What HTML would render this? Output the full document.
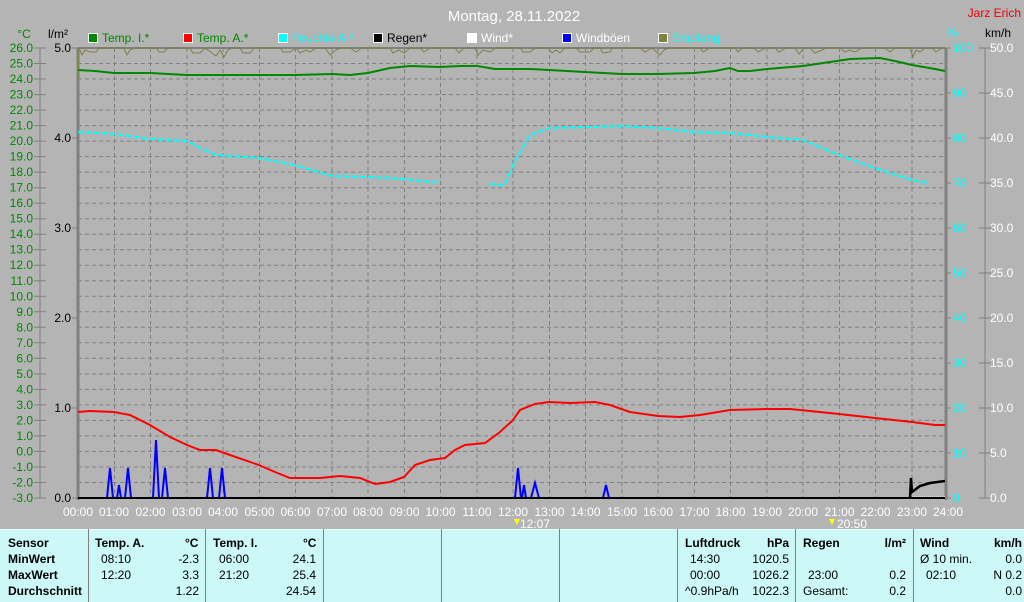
<!DOCTYPE html><html><head><meta charset="utf-8"><style>
body{margin:0;width:1024px;height:602px;overflow:hidden;background:#b4b4b4;font-family:"Liberation Sans",sans-serif}
.t{position:absolute;font-size:12px;color:#000;white-space:nowrap}
.b{font-weight:bold}
</style></head><body>
<svg width="1024" height="529" style="position:absolute;left:0;top:0" font-family="Liberation Sans, sans-serif" font-size="12">
<rect width="1024" height="529" fill="#b4b4b4"/>
<text x="514" y="21" fill="#fff" font-size="15" text-anchor="middle">Montag, 28.11.2022</text>
<text x="1021" y="17" fill="#e00" text-anchor="end">Jarz Erich</text>
<text x="24" y="38" fill="#080" text-anchor="middle">°C</text>
<text x="58" y="38" fill="#000" text-anchor="middle">l/m²</text>
<text x="952" y="37" fill="#0ff" text-anchor="middle">%</text>
<text x="998" y="37" fill="#000" text-anchor="middle">km/h</text>
<g stroke="#fff" stroke-width="1">
<rect x="88.5" y="33.5" width="9" height="9" fill="#080"/>
<rect x="183.5" y="33.5" width="9" height="9" fill="#f00"/>
<rect x="278.5" y="33.5" width="9" height="9" fill="#0ff"/>
<rect x="373.5" y="33.5" width="9" height="9" fill="#000"/>
<rect x="467.5" y="33.5" width="9" height="9" fill="#fff"/>
<rect x="562.5" y="33.5" width="9" height="9" fill="#00f"/>
<rect x="658.5" y="33.5" width="9" height="9" fill="#808040"/>
</g>
<text x="102" y="42" fill="#080">Temp. I.*</text>
<text x="197" y="42" fill="#080">Temp. A.*</text>
<text x="292" y="42" fill="#0ff">Feuchte A.*</text>
<text x="387" y="42" fill="#000">Regen*</text>
<text x="481" y="42" fill="#fff">Wind*</text>
<text x="576" y="42" fill="#fff">Windböen</text>
<text x="672" y="42" fill="#0ff">Empfang</text>
<!-- grid -->
<g stroke="#808080" stroke-dasharray="4,3" stroke-width="1">
<path d="M114.5 48V498M150.5 48V498M187 48V498M223 48V498M259.5 48V498M295.5 48V498M332 48V498M368 48V498M404.5 48V498M440.5 48V498M477 48V498M513 48V498M549.5 48V498M585.5 48V498M622 48V498M658 48V498M694.5 48V498M730.5 48V498M767 48V498M803 48V498M839.5 48V498M875.5 48V498M912 48V498"/>
<path d="M78 63.5H945M78 79H945M78 94.6H945M78 110.1H945M78 125.6H945M78 141.1H945M78 156.6H945M78 172.1H945M78 187.7H945M78 203.2H945M78 218.7H945M78 234.2H945M78 249.7H945M78 265.2H945M78 280.8H945M78 296.3H945M78 311.8H945M78 327.3H945M78 342.8H945M78 358.3H945M78 373.9H945M78 389.4H945M78 404.9H945M78 420.4H945M78 435.9H945M78 451.4H945M78 467H945M78 482.5H945"/>
</g>
<path d="M78 48H945" stroke="#808080" stroke-width="2"/>
<path d="M78 48V500M946 48V500" stroke="#808080" stroke-width="3"/>
<path d="M40 48V498M985 48V498" stroke="#808080"/>
<g stroke="#808080">
<path d="M34 48H46M34 63.5H46M34 79H46M34 94.6H46M34 110.1H46M34 125.6H46M34 141.1H46M34 156.6H46M34 172.1H46M34 187.7H46M34 203.2H46M34 218.7H46M34 234.2H46M34 249.7H46M34 265.2H46M34 280.8H46M34 296.3H46M34 311.8H46M34 327.3H46M34 342.8H46M34 358.3H46M34 373.9H46M34 389.4H46M34 404.9H46M34 420.4H46M34 435.9H46M34 451.4H46M34 467H46M34 482.5H46M34 498H46"/>
<path d="M979 48H991M979 93H991M979 138H991M979 183H991M979 228H991M979 273H991M979 318H991M979 363H991M979 408H991M979 453H991M979 498H991"/>
<path d="M72 48H78M72 138H78M72 228H78M72 318H78M72 408H78M72 498H78"/>
<path d="M945 48H951M945 93H951M945 138H951M945 183H951M945 228H951M945 273H951M945 318H951M945 363H951M945 408H951M945 453H951M945 498H951"/>
</g>
<g fill="#080" text-anchor="end">
<text x="33" y="52">26.0</text><text x="33" y="67.5">25.0</text><text x="33" y="83">24.0</text><text x="33" y="98.6">23.0</text><text x="33" y="114.1">22.0</text><text x="33" y="129.6">21.0</text><text x="33" y="145.1">20.0</text><text x="33" y="160.6">19.0</text><text x="33" y="176.1">18.0</text><text x="33" y="191.7">17.0</text><text x="33" y="207.2">16.0</text><text x="33" y="222.7">15.0</text><text x="33" y="238.2">14.0</text><text x="33" y="253.7">13.0</text><text x="33" y="269.2">12.0</text><text x="33" y="284.8">11.0</text><text x="33" y="300.3">10.0</text><text x="33" y="315.8">9.0</text><text x="33" y="331.3">8.0</text><text x="33" y="346.8">7.0</text><text x="33" y="362.3">6.0</text><text x="33" y="377.9">5.0</text><text x="33" y="393.4">4.0</text><text x="33" y="408.9">3.0</text><text x="33" y="424.4">2.0</text><text x="33" y="439.9">1.0</text><text x="33" y="455.4">0.0</text><text x="33" y="471">-1.0</text><text x="33" y="486.5">-2.0</text><text x="33" y="502">-3.0</text>
</g>
<g fill="#000" text-anchor="end">
<text x="71" y="52">5.0</text><text x="71" y="142">4.0</text><text x="71" y="232">3.0</text><text x="71" y="322">2.0</text><text x="71" y="412">1.0</text><text x="71" y="502">0.0</text>
</g>
<g fill="#0ff">
<text x="953" y="52">100</text><text x="953" y="97">90</text><text x="953" y="142">80</text><text x="953" y="187">70</text><text x="953" y="232">60</text><text x="953" y="277">50</text><text x="953" y="322">40</text><text x="953" y="367">30</text><text x="953" y="412">20</text><text x="953" y="457">10</text><text x="953" y="502">0</text>
</g>
<g fill="#fff">
<text x="990" y="52">50.0</text><text x="990" y="97">45.0</text><text x="990" y="142">40.0</text><text x="990" y="187">35.0</text><text x="990" y="232">30.0</text><text x="990" y="277">25.0</text><text x="990" y="322">20.0</text><text x="990" y="367">15.0</text><text x="990" y="412">10.0</text><text x="990" y="457">5.0</text><text x="990" y="502">0.0</text>
</g>
<g fill="#fff" text-anchor="middle">
<text x="78" y="516">00:00</text><text x="114" y="516">01:00</text><text x="150.5" y="516">02:00</text><text x="187" y="516">03:00</text><text x="223" y="516">04:00</text><text x="259.5" y="516">05:00</text><text x="295.5" y="516">06:00</text><text x="332" y="516">07:00</text><text x="368" y="516">08:00</text><text x="404.5" y="516">09:00</text><text x="440.5" y="516">10:00</text><text x="477" y="516">11:00</text><text x="513" y="516">12:00</text><text x="549.5" y="516">13:00</text><text x="585.5" y="516">14:00</text><text x="622" y="516">15:00</text><text x="658" y="516">16:00</text><text x="694.5" y="516">17:00</text><text x="730.5" y="516">18:00</text><text x="767" y="516">19:00</text><text x="803" y="516">20:00</text><text x="839.5" y="516">21:00</text><text x="875.5" y="516">22:00</text><text x="912" y="516">23:00</text><text x="948" y="516">24:00</text>
</g>
<text x="520" y="528" fill="#fff">12:07</text>
<text x="837" y="528" fill="#fff">20:50</text>
<path d="M514 519l3 6 3-6z" fill="#ff0"/><path d="M829 519l3 6 3-6z" fill="#ff0"/>
<!-- empfang -->
<polyline fill="none" stroke="#808040" stroke-width="1" points="78,80 79,48 82,55 85,50 90,52 96,52 99,48 124,48 127,55 130,50 135,48 156,48 159,52 164,52 168,48 190,48 193,53 200,53 205,48 212,53 216,56 220,50 224,57 228,50 232,48 240,48 243,53 250,53 254,48 280,48 283,52 290,52 296,48 300,53 306,50 310,52 316,48 325,48 330,55 336,50 340,48 350,48 356,52 362,48 390,48 393,53 399,50 404,53 410,48 420,48 424,52 430,48 455,48 459,53 464,48 475,48 478,55 483,50 490,52 496,48 520,48 523,52 530,52 535,48 548,48 552,53 556,50 560,53 565,48 576,48 580,52 590,52 594,48 600,48 603,53 610,52 612,48 640,48 645,52 652,48 660,55 664,50 668,48 700,48 703,52 710,48 735,48 738,52 742,48 754,48 758,52 766,48 775,48 779,52 786,48 795,48 799,54 804,48 810,48 815,53 822,50 826,48 840,48 845,52 850,50 855,52 862,48 885,48 890,52 895,48 910,48 913,57 916,50 920,52 925,48 932,48 936,52 942,48 945,48"/>
<!-- humidity -->
<polyline fill="none" stroke="#0ff" stroke-width="2" stroke-dasharray="6,2" points="78,132 114,134 150,139 187,141 200,148 216,155 259,158 295,165 332,176 368,177 404,179 430,182 440,182"/>
<polyline fill="none" stroke="#0ff" stroke-width="2" stroke-dasharray="6,2" points="490,184 505,185 513,165 530,135 549,128 585,127 622,126 658,128 694,132 730,133 767,137 803,140 839,155 875,168 912,180 930,183"/>
<!-- temp I -->
<polyline fill="none" stroke="#080" stroke-width="2" points="78,70 95,71 114,73 150,73 187,75 295,75 332,74 350,75 368,73 390,68 410,66 440,67 460,66 477,66 495,69 530,69 549,70 585,72 622,74 658,74 694,73 715,71 730,68 738,71 750,71 767,69 803,66 830,62 850,59 880,58 895,61 912,65 935,69 945,71"/>
<!-- temp A -->
<polyline fill="none" stroke="#f00" stroke-width="2" points="78,412 90,411 114,412 130,415 150,425 170,437 187,445 200,450 216,450 230,455 259,465 275,472 290,478 320,478 340,476 360,478 375,484 390,482 404,477 415,465 430,460 445,458 455,450 465,445 485,443 500,432 513,420 520,410 535,404 549,402 570,403 595,402 610,405 630,412 658,416 680,417 700,415 730,410 767,409 790,409 810,411 839,414 875,418 912,422 935,425 945,425"/>
<!-- wind gusts -->
<g fill="none" stroke="#00f" stroke-width="2">
<polyline points="107,498 110,468 113,498"/><polyline points="117,498 119,485 121,498"/><polyline points="125,498 128,468 131,498"/>
<polyline points="153,498 156,440 159,498"/><polyline points="162,498 165,468 168,498"/>
<polyline points="207,498 210,468 213,498"/><polyline points="219,498 222,468 225,498"/>
<polyline points="515,498 518,468 521,498"/><polyline points="522,498 524,485 526,498"/><polyline points="531,498 535,483 539,498"/>
<polyline points="603,498 606,485 609,498"/>
</g>
<!-- rain -->
<polyline fill="none" stroke="#000" stroke-width="2.5" points="910,498 911,478 912,492 920,486 930,483 945,481"/>
<path d="M912 497H945" stroke="#fff" stroke-dasharray="1,1"/>
<path d="M78 498H945" stroke="#000" stroke-width="2"/>
</svg>
<div style="position:absolute;left:0;top:529px;width:1024px;height:73px;background:#ccf8f8;border-top:1px solid #e8ffff;box-sizing:border-box"></div>
<div style="position:absolute;top:529px;height:73px;left:88px;width:1px;background:#808080"></div>
<div style="position:absolute;top:529px;height:73px;left:205px;width:1px;background:#808080"></div>
<div style="position:absolute;top:529px;height:73px;left:323px;width:1px;background:#808080"></div>
<div style="position:absolute;top:529px;height:73px;left:441px;width:1px;background:#808080"></div>
<div style="position:absolute;top:529px;height:73px;left:559px;width:1px;background:#808080"></div>
<div style="position:absolute;top:529px;height:73px;left:677px;width:1px;background:#808080"></div>
<div style="position:absolute;top:529px;height:73px;left:795px;width:1px;background:#808080"></div>
<div style="position:absolute;top:529px;height:73px;left:913px;width:1px;background:#808080"></div>
<div class="t b" style="left:8px;top:536px">Sensor</div>
<div class="t b" style="left:8px;top:552px">MinWert</div>
<div class="t b" style="left:8px;top:568px">MaxWert</div>
<div class="t b" style="left:8px;top:584px">Durchschnitt</div>
<div class="t b" style="left:95px;top:536px">Temp. A.</div>
<div class="t b" style="left:185px;top:536px">°C</div>
<div class="t" style="left:101px;top:552px">08:10</div><div class="t" style="right:825px;top:552px">-2.3</div>
<div class="t" style="left:101px;top:568px">12:20</div><div class="t" style="right:825px;top:568px">3.3</div>
<div class="t" style="right:825px;top:584px">1.22</div>
<div class="t b" style="left:213px;top:536px">Temp. I.</div>
<div class="t b" style="left:303px;top:536px">°C</div>
<div class="t" style="left:219px;top:552px">06:00</div><div class="t" style="right:708px;top:552px">24.1</div>
<div class="t" style="left:219px;top:568px">21:20</div><div class="t" style="right:708px;top:568px">25.4</div>
<div class="t" style="right:708px;top:584px">24.54</div>
<div class="t b" style="left:685px;top:536px">Luftdruck</div>
<div class="t b" style="right:235px;top:536px">hPa</div>
<div class="t" style="left:690px;top:552px">14:30</div><div class="t" style="right:235px;top:552px">1020.5</div>
<div class="t" style="left:690px;top:568px">00:00</div><div class="t" style="right:235px;top:568px">1026.2</div>
<div class="t" style="left:685px;top:584px">^0.9hPa/h</div><div class="t" style="right:235px;top:584px">1022.3</div>
<div class="t b" style="left:803px;top:536px">Regen</div>
<div class="t b" style="right:118px;top:536px">l/m²</div>
<div class="t" style="left:808px;top:568px">23:00</div><div class="t" style="right:118px;top:568px">0.2</div>
<div class="t" style="left:803px;top:584px">Gesamt:</div><div class="t" style="right:118px;top:584px">0.2</div>
<div class="t b" style="left:920px;top:536px">Wind</div>
<div class="t b" style="right:2px;top:536px">km/h</div>
<div class="t" style="left:920px;top:552px">Ø 10 min.</div><div class="t" style="right:2px;top:552px">0.0</div>
<div class="t" style="left:926px;top:568px">02:10</div><div class="t" style="right:2px;top:568px">N 0.2</div>
<div class="t" style="right:2px;top:584px">0.0</div>
</body></html>
